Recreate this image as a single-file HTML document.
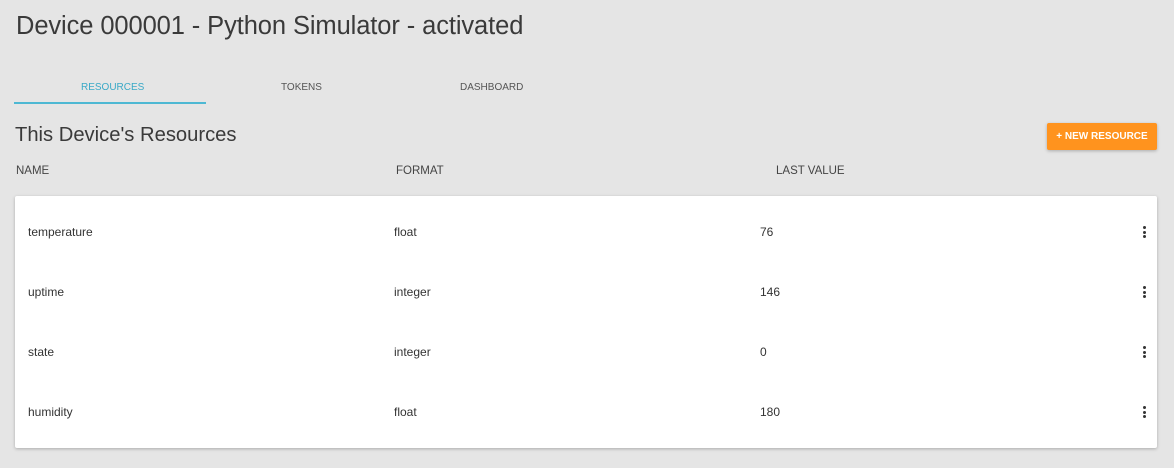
<!DOCTYPE html>
<html><head><style>
body{margin:0;width:1174px;height:468px;background:#e5e5e5;font-family:"Liberation Sans",sans-serif;color:#333;position:relative;overflow:hidden}
.a{position:absolute;white-space:nowrap}
h1{position:absolute;left:16px;top:12px;margin:0;font-weight:normal;font-size:25.5px;color:#3a3a3a;letter-spacing:-0.1px}
.tab{font-size:10px;color:#555;top:82px}
.hd{font-size:11.5px;color:#444;top:165px}
.card{position:absolute;left:15px;top:196px;width:1142px;height:252px;background:#fff;border-radius:2px;box-shadow:0 1px 3px rgba(0,0,0,.25)}
.c{font-size:12px;color:#333}
.dots{position:absolute;left:1143px;width:4px}
.dots i{display:block;width:3px;height:3px;background:#333;border-radius:50%;margin-bottom:1.5px}
</style></head><body>
<h1>Device 000001 - Python Simulator - activated</h1>
<div class="a tab" style="left:81px;color:#3aa9c7">RESOURCES</div>
<div class="a tab" style="left:281px">TOKENS</div>
<div class="a tab" style="left:460px">DASHBOARD</div>
<div class="a" style="left:14px;top:102px;width:192px;height:2px;background:#4db8d3"></div>
<div class="a" style="left:15px;top:124px;font-size:20.2px;color:#3a3a3a">This Device's Resources</div>
<div class="a" style="left:1047px;top:123px;width:110px;height:27px;background:#ff931e;color:#fff;font-size:10px;font-weight:bold;line-height:27px;text-align:center;border-radius:2px;box-shadow:0 1px 3px rgba(0,0,0,.25)">+ NEW RESOURCE</div>
<div class="a hd" style="left:16px">NAME</div>
<div class="a hd" style="left:396px">FORMAT</div>
<div class="a hd" style="left:776px">LAST VALUE</div>
<div class="card"></div>
<div class="a c" style="left:28px;top:225px">temperature</div><div class="a c" style="left:394px;top:225px">float</div><div class="a c" style="left:760px;top:225px">76</div>
<div class="dots" style="top:226px"><i></i><i></i><i></i></div>
<div class="a c" style="left:28px;top:285px">uptime</div><div class="a c" style="left:394px;top:285px">integer</div><div class="a c" style="left:760px;top:285px">146</div>
<div class="dots" style="top:286px"><i></i><i></i><i></i></div>
<div class="a c" style="left:28px;top:345px">state</div><div class="a c" style="left:394px;top:345px">integer</div><div class="a c" style="left:760px;top:345px">0</div>
<div class="dots" style="top:346px"><i></i><i></i><i></i></div>
<div class="a c" style="left:28px;top:405px">humidity</div><div class="a c" style="left:394px;top:405px">float</div><div class="a c" style="left:760px;top:405px">180</div>
<div class="dots" style="top:406px"><i></i><i></i><i></i></div>
</body></html>
